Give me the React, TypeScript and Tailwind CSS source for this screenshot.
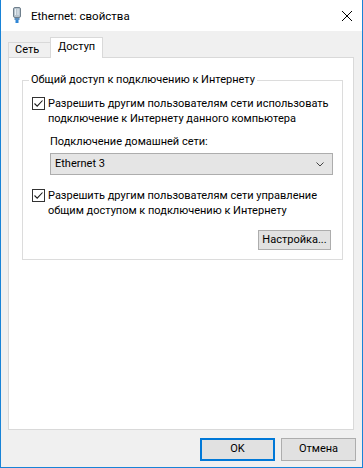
import React from 'react';

const font = { fontFamily: '"Segoe UI", Roboto, Arial, sans-serif' };

const Check: React.FC = () => (
  <div className="w-[13px] h-[13px] shrink-0 border border-[#333333] bg-white flex items-center justify-center">
    <svg width="11" height="11" viewBox="0 0 11 11">
      <path d="M1.5 5.5 L4.2 8.2 L9.5 2.5" fill="none" stroke="#1a1a1a" strokeWidth="1.1" />
    </svg>
  </div>
);

const PlugIcon: React.FC = () => (
  <svg width="8" height="16" viewBox="0 0 8 16">
    <rect x="0.5" y="0.5" width="7" height="10" rx="1.5" fill="#b7c3cc" stroke="#6f7f8c" />
    <rect x="2" y="2" width="1" height="6" fill="#e8eef2" />
    <rect x="4.5" y="2" width="1" height="6" fill="#e8eef2" />
    <rect x="1.5" y="11" width="5" height="2" fill="#5b8fc0" />
    <rect x="2.5" y="13" width="3" height="3" fill="#2f86d6" />
  </svg>
);

export default function App() {
  return (
    <div
      className="w-[363px] h-[468px] bg-[#f0f0f0] border-l border-r border-b border-[#1883d7] flex flex-col text-[11px] text-black select-none whitespace-nowrap"
      style={font}
    >
      {/* title bar */}
      <div className="h-[31px] bg-white flex items-center shrink-0">
        <div className="ml-[12px] mt-[-1px] w-[8px]">
          <PlugIcon />
        </div>
        <span className="ml-[10px] text-[11.5px] leading-[16px]">Ethernet: свойства</span>
        <div className="ml-auto mr-[10px] w-[10px] h-[10px]">
          <svg width="10" height="10" viewBox="0 0 10 10">
            <path d="M0 0 L10 10 M10 0 L0 10" stroke="#000" strokeWidth="1" />
          </svg>
        </div>
      </div>

      {/* tabs */}
      <div className="ml-[7px] mt-[6px] flex items-end h-[20px]">
        <div className="w-[42px] h-[15px] border-t border-l border-[#d9d9d9] bg-[#f0f0f0] pl-[6px] leading-[14px]">
          Сеть
        </div>
        <div className="relative z-10 w-[53px] h-[21px] mb-[-1px] border border-b-0 border-[#d9d9d9] bg-white pl-[7px] pt-[2px] leading-[14px]">
          Доступ
        </div>
      </div>

      {/* panel */}
      <div className="ml-[7px] w-[346px] h-[373px] border border-[#d9d9d9] bg-white pt-[22px] pl-[13px]">
        <div className="relative w-[321px] h-[180px] border border-[#dcdcdc] pt-[16px] pl-[9px]">
          <span className="absolute left-[6px] -top-[9px] px-[2px] bg-white leading-[16px]">
            Общий доступ к подключению к Интернету
          </span>

          <div className="flex items-start gap-[3px]">
            <Check />
            <div className="leading-[15px] -mt-[1px]">
              <div>Разрешить другим пользователям сети использовать</div>
              <div>подключение к Интернету данного компьютера</div>
            </div>
          </div>

          <div className="ml-[18px] mt-[8px] leading-[15px]">Подключение домашней сети:</div>

          <div className="ml-[18px] mt-[4px] w-[283px] h-[22px] border border-[#adadad] bg-[#e5e5e5] flex items-center pl-[4px] pr-[8px]">
            <span>Ethernet 3</span>
            <svg className="ml-auto" width="8" height="5" viewBox="0 0 8 5">
              <path d="M0.5 0.5 L4 4 L7.5 0.5" fill="none" stroke="#444" strokeWidth="1" />
            </svg>
          </div>

          <div className="flex items-start gap-[3px] mt-[14px]">
            <Check />
            <div className="leading-[15px] -mt-[1px]">
              <div>Разрешить другим пользователям сети управление</div>
              <div>общим доступом к подключению к Интернету</div>
            </div>
          </div>

          <div className="flex justify-end pr-[11px] mt-[12px]">
            <div className="w-[73px] h-[20px] border border-[#adadad] bg-[#e1e1e1] flex items-center justify-center leading-[14px]">
              Настройка...
            </div>
          </div>
        </div>
      </div>

      {/* footer buttons */}
      <div className="flex justify-end gap-[6px] mt-[8px] pr-[6px]">
        <div className="w-[75px] h-[23px] border-2 border-[#0078d7] bg-[#e1e1e1] flex items-center justify-center">
          OK
        </div>
        <div className="w-[75px] h-[23px] border border-[#adadad] bg-[#e1e1e1] flex items-center justify-center">
          Отмена
        </div>
      </div>
    </div>
  );
}
